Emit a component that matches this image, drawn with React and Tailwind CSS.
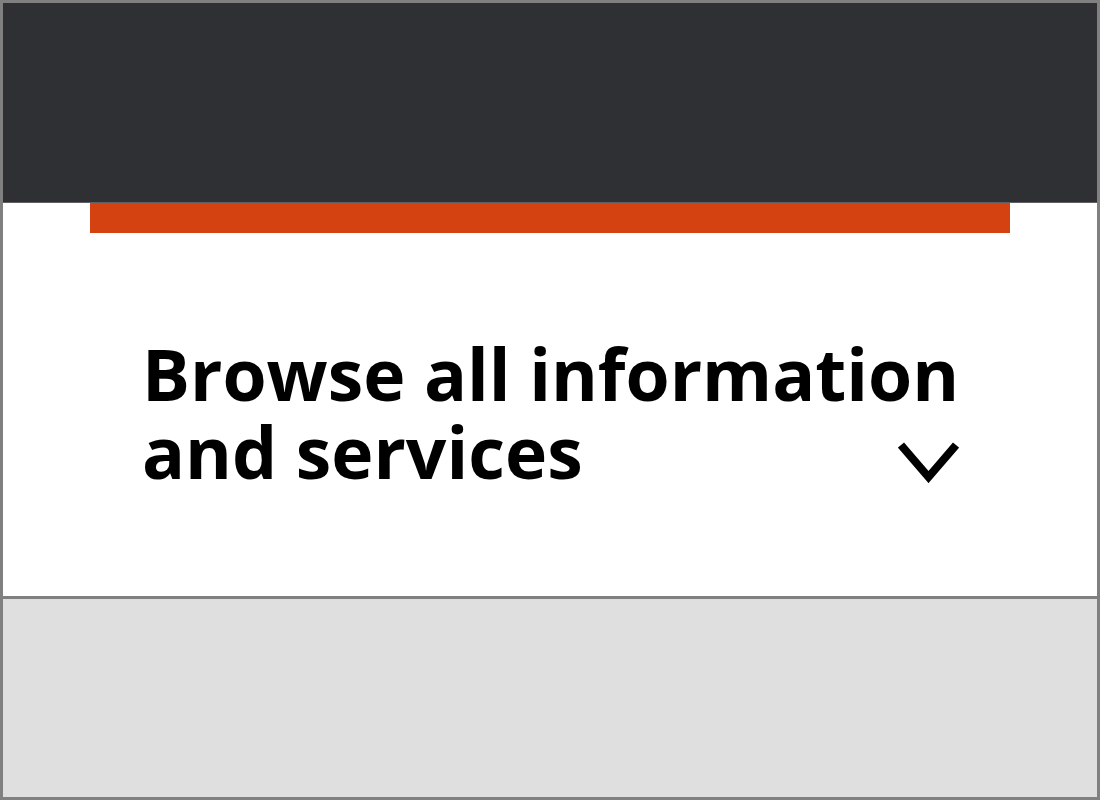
export default function App() {
  return (
    <div className="w-[1100px] h-[800px] border-[3px] border-[#808080] flex flex-col bg-white" style={{ fontFamily: '"Open Sans", sans-serif' }}>
      <div className="h-[200px] bg-[#2f3034] border-b border-[#5e5f62] shrink-0" />
      <div className="h-[393px] shrink-0 bg-white flex flex-col">
        <div className="mx-[87px] h-[30px] bg-[#d44211]" />
        <div className="mt-[102px] ml-[139px] w-[815px] grid">
          <h2 className="col-start-1 row-start-1 text-[71.4px] leading-[78px] font-bold text-black whitespace-nowrap">
            Browse all information<br />and services
          </h2>
          <svg width="61" height="41" viewBox="0 0 61 41" className="col-start-1 row-start-1 justify-self-end self-end mb-[8px]">
            <polyline points="3,3 30.5,35 58,3" fill="none" stroke="#000" strokeWidth="8" />
          </svg>
        </div>
      </div>
      <div className="flex-1 bg-[#dfdfdf] border-t-[3px] border-[#808080]" />
    </div>
  );
}
